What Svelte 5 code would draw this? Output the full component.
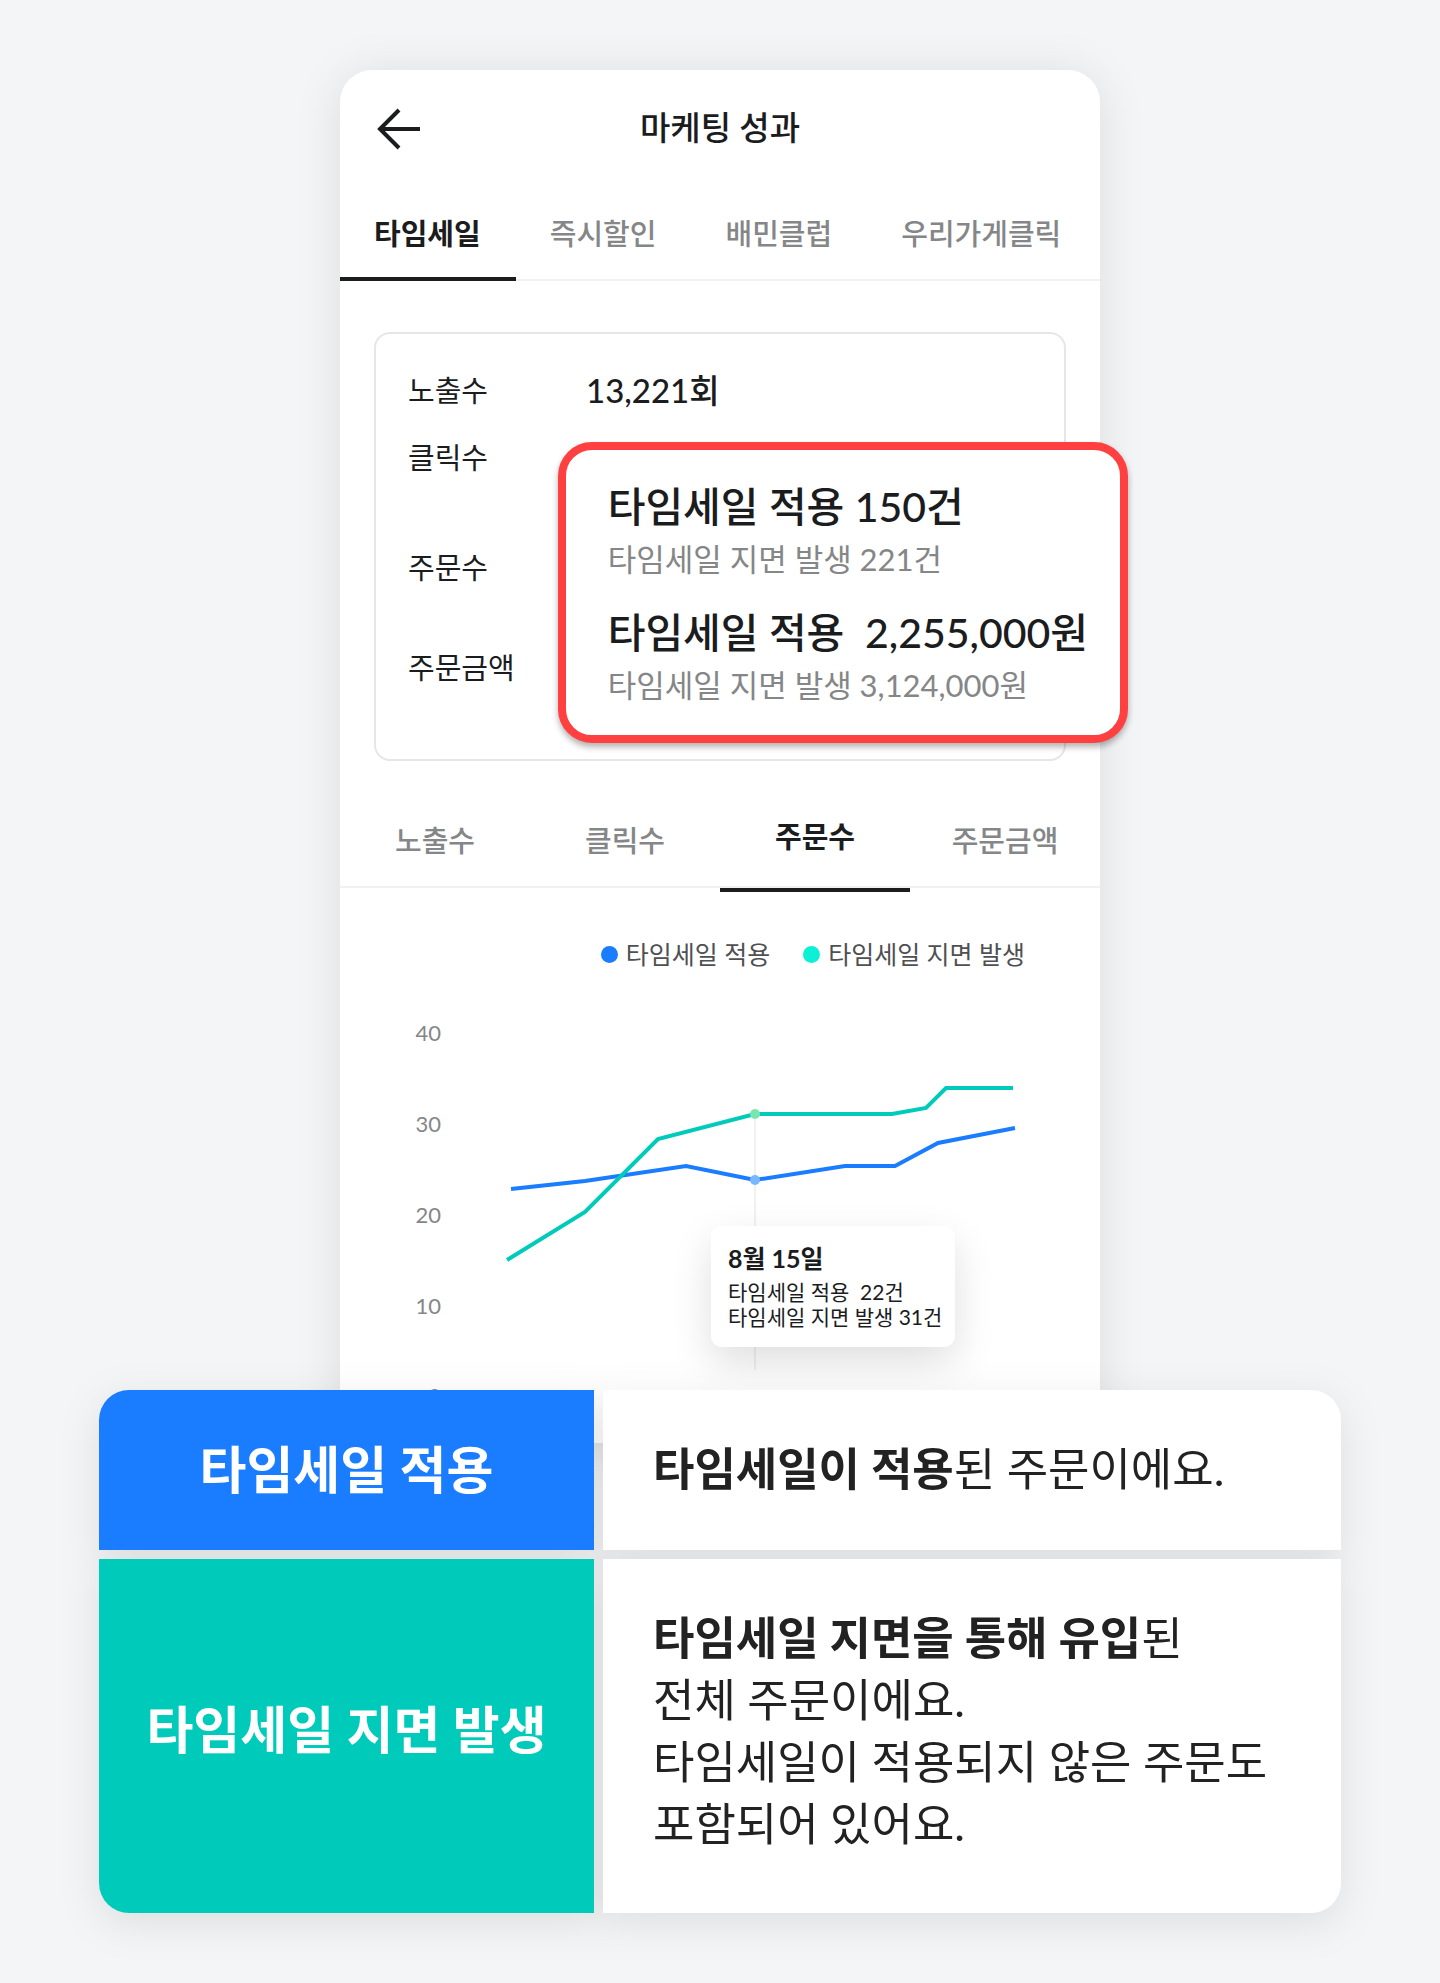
<script>
    const campaignTabs = ['타임세일', '즉시할인', '배민클럽', '우리가게클릭'];
    const metricTabs = ['노출수', '클릭수', '주문수', '주문금액'];

    let activeCampaign = '타임세일';
    let activeMetric = '주문수';

    const results = [
        { title: '타임세일 적용 150건', detail: '타임세일 지면 발생 221건' },
        { title: '타임세일 적용\u00a0 2,255,000원', detail: '타임세일 지면 발생 3,124,000원' },
    ];

    const ticks = [
        { label: 40, y: 50 },
        { label: 30, y: 141 },
        { label: 20, y: 232 },
        { label: 10, y: 323 },
        { label: 0, y: 413 },
    ];

    const applied = '171,198 245,190 346,175 415,189 505,175 555,175 598,152 675,137';
    const exposed = '167,269 245,221 318,148 415,123 552,123 586,117 606,97 673,97';
</script>

<main>
    <section class="phone">
        <header>
            <button class="back" type="button" aria-label="뒤로">
                <svg viewBox="0 0 44 42" width="44" height="42">
                    <path d="M43 21H3M22 2L3 21l19 19" fill="none" stroke="#1b1c1e" stroke-width="4" />
                </svg>
            </button>
            <h1>마케팅 성과</h1>
        </header>

        <nav class="campaign_tabs">
            {#each campaignTabs as tab}
                <button type="button" class:active={tab === activeCampaign} on:click={() => (activeCampaign = tab)}>{tab}</button>
            {/each}
        </nav>

        <div class="summary">
            <dl>
                <dt>노출수</dt>
                <dd>13,221회</dd>
                <dt>클릭수</dt>
                <dd></dd>
                <dt>주문수</dt>
                <dd></dd>
                <dt>주문금액</dt>
                <dd></dd>
            </dl>
            <div class="callout">
                {#each results as result}
                    <div class="result">
                        <p class="result_title">{result.title}</p>
                        <p class="result_detail">{result.detail}</p>
                    </div>
                {/each}
            </div>
        </div>

        <nav class="metric_tabs">
            {#each metricTabs as tab}
                <button type="button" class:active={tab === activeMetric} on:click={() => (activeMetric = tab)}>{tab}</button>
            {/each}
        </nav>

        <ul class="legend">
            <li><span class="dot blue"></span>타임세일 적용</li>
            <li><span class="dot mint"></span>타임세일 지면 발생</li>
        </ul>

        <div class="chart">
            <svg class="plot" viewBox="0 0 760 452">
                {#each ticks as tick}
                    <text x="101" y={tick.y} text-anchor="end">{tick.label}</text>
                {/each}
                <line x1="415" y1="123" x2="415" y2="379" stroke="#f1f1f2" stroke-width="2" />
                <polyline points={applied} stroke="#1a7cff" />
                <polyline points={exposed} stroke="#00cbbb" />
                <circle cx="415" cy="123" r="5" fill="#7ae6ae" />
                <circle cx="415" cy="189" r="5" fill="#79b8ff" />
            </svg>
            <div class="tooltip">
                <strong>8월 15일</strong>
                <p>타임세일 적용&nbsp; 22건</p>
                <p>타임세일 지면 발생 31건</p>
            </div>
        </div>
    </section>

    <dl class="terms">
        <dt class="term_blue">타임세일 적용</dt>
        <dd class="top"><p><b>타임세일이 적용</b>된 주문이에요.</p></dd>
        <dt class="term_teal">타임세일 지면 발생</dt>
        <dd class="bottom">
            <p>
                <b>타임세일 지면을 통해 유입</b>된<br />
                전체 주문이에요.<br />
                타임세일이 적용되지 않은 주문도<br />
                포함되어 있어요.
            </p>
        </dd>
    </dl>
</main>

<style>
    :global(body) {
        margin: 0;
        background: #f4f5f7;
    }

    main {
        box-sizing: border-box;
        padding: 70px 99px;
        overflow: hidden;
        background: #f4f5f7;
        color: #1b1c1e;
        font-family: Lato, "Noto Sans CJK KR", sans-serif;
    }

    h1,
    p,
    dl,
    dd,
    ul {
        margin: 0;
        padding: 0;
    }

    button {
        padding: 0;
        border: none;
        background: none;
        color: inherit;
        font-family: inherit;
        cursor: pointer;
    }

    .phone {
        max-width: 760px;
        margin: 0 auto;
        border-radius: 32px 32px 0 0;
        background: #fff;
        box-shadow: 0 4px 48px rgba(0, 0, 0, 0.1);
    }

    header {
        display: grid;
        grid-template-columns: 44px 1fr 44px;
        align-items: center;
        height: 118px;
        padding: 0 37px;
    }

    .back {
        display: flex;
    }

    h1 {
        padding-bottom: 4px;
        text-align: center;
        font-size: 33px;
        font-weight: 500;
        line-height: 48px;
    }

    nav {
        display: flex;
        border-bottom: 2px solid #f1f1f2;
    }

    nav button {
        color: #858687;
        font-size: 29px;
        font-weight: 500;
        line-height: 44px;
    }

    nav .active {
        color: #1b1c1e;
        font-weight: 700;
    }

    .campaign_tabs button {
        margin-bottom: -2px;
        padding: 24px 35px 21px 34px;
        border-bottom: 4px solid transparent;
    }

    .campaign_tabs .active {
        border-bottom-color: #1b1c1e;
    }

    .summary {
        position: relative;
        margin: 51px 34px 0;
        padding: 35px 32px 40px;
        border: 2px solid #e6e6e7;
        border-radius: 16px;
    }

    .summary dl {
        display: grid;
        grid-template-columns: 178px 1fr;
        grid-template-rows: 67px 110px 100px 73px;
    }

    .summary dt {
        font-size: 29px;
        line-height: 44px;
    }

    .summary dd {
        font-size: 33px;
        font-weight: 500;
        line-height: 42px;
    }

    .callout {
        position: absolute;
        top: 108px;
        right: -64px;
        box-sizing: border-box;
        display: flex;
        flex-direction: column;
        gap: 22px;
        padding: 29px 32px 26px 42px;
        border: 8px solid #ff4040;
        border-radius: 34px;
        background: #fff;
        box-shadow: 0 4px 6px rgba(0, 0, 0, 0.3);
        white-space: nowrap;
    }

    .result_title {
        font-size: 41px;
        font-weight: 500;
        line-height: 56px;
    }

    .result_detail {
        color: #858687;
        font-size: 31px;
        line-height: 48px;
    }

    .metric_tabs {
        margin-top: 54px;
    }

    .metric_tabs button {
        flex: 1;
        margin-bottom: -6px;
        padding: 4px 0 29px;
    }

    .metric_tabs .active {
        padding: 0 0 29px;
        border-bottom: 4px solid #1b1c1e;
    }

    .legend {
        display: flex;
        justify-content: flex-end;
        gap: 33px;
        padding: 48px 75px 0 0;
        color: #4f5052;
        font-size: 25px;
        line-height: 36px;
        list-style: none;
    }

    .legend li {
        display: flex;
        align-items: center;
        gap: 8px;
    }

    .dot {
        width: 17px;
        height: 17px;
        border-radius: 50%;
    }

    .blue {
        background: #1a7cff;
    }

    .mint {
        background: #0cf0d6;
    }

    .chart {
        position: relative;
        margin-top: 19px;
    }

    .plot {
        display: block;
        width: 100%;
    }

    .plot text {
        fill: #858687;
        font-size: 22px;
    }

    .plot polyline {
        fill: none;
        stroke-width: 4;
    }

    .tooltip {
        position: absolute;
        top: 235px;
        left: 371px;
        padding: 14px 13px 18px 17px;
        border-radius: 11px;
        background: #fff;
        box-shadow: 0 16px 40px rgba(0, 0, 0, 0.13);
        font-size: 21px;
        line-height: 25px;
        white-space: nowrap;
    }

    .tooltip strong {
        display: block;
        margin-bottom: 3px;
        font-size: 25px;
        line-height: 36px;
    }

    .terms {
        position: relative;
        display: grid;
        grid-template-columns: 495fr 738fr;
        gap: 9px;
        max-width: 1242px;
        margin: -53px auto 0;
        filter: drop-shadow(0 10px 20px rgba(0, 0, 0, 0.09));
    }

    .terms dt,
    .terms dd {
        display: flex;
        align-items: center;
    }

    .terms dt {
        justify-content: center;
        color: #fff;
        font-size: 51px;
        font-weight: 700;
        line-height: 64px;
    }

    .terms dd {
        padding: 48px 50px 50px;
        background: #fff;
        color: #222;
        font-size: 45px;
        line-height: 62px;
    }

    .terms .bottom {
        padding: 48px 50px 58px;
    }

    .term_blue {
        border-radius: 30px 0 0 0;
        background: #1a7cff;
    }

    .term_teal {
        padding-bottom: 12px;
        border-radius: 0 0 0 30px;
        background: #00cbbb;
    }

    .top {
        border-radius: 0 30px 0 0;
    }

    .bottom {
        border-radius: 0 0 30px 0;
    }
</style>
